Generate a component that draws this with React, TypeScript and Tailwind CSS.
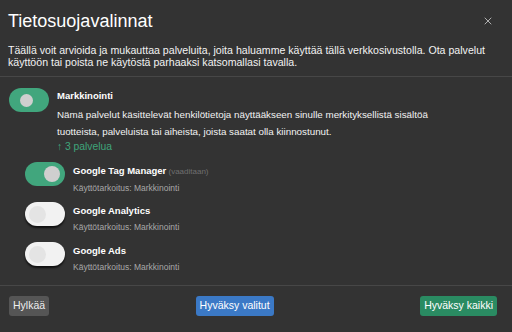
import { X } from "lucide-react"

const services = [
  { name: "Google Tag Manager", required: true, on: true },
  { name: "Google Analytics", required: false, on: false },
  { name: "Google Ads", required: false, on: false },
]

function Toggle({ on, half }: { on: boolean; half?: boolean }) {
  if (half) {
    return (
      <div className="w-10 h-6 rounded-full bg-[#41a67d] flex items-center pl-[11px] shrink-0">
        <div className="w-[13px] h-[13px] rounded-full bg-[#cfcfcf]" />
      </div>
    )
  }
  return on ? (
    <div className="w-10 h-6 rounded-full bg-[#41a67d] flex items-center justify-end pr-[5px] shrink-0">
      <div className="w-[16px] h-[16px] rounded-full bg-[#cfcfcf]" />
    </div>
  ) : (
    <div className="w-10 h-6 rounded-full bg-[#f2f2f2] flex items-center pl-[4px] shrink-0 shadow-[0_2px_2px_rgba(0,0,0,0.7)]">
      <div className="w-[17px] h-[17px] rounded-full bg-[#e4e4e4]" />
    </div>
  )
}

export default function App() {
  return (
    <div className="w-[512px] h-[332px] bg-[#333333] text-[#f2f2f2] font-['Liberation_Sans',Arial,sans-serif] flex flex-col overflow-hidden">
      {/* Header */}
      <div className="px-2 pt-[10px] pb-[8px] border-b border-[#474747]">
        <div className="flex items-center justify-between">
          <h1 className="text-[18px] leading-[22px] text-white">Tietosuojavalinnat</h1>
          <X className="w-3 h-3 text-[#c4c4c4] mr-[10px]" strokeWidth={1.75} />
        </div>
        <p className="text-[10.6px] leading-[12px] mt-[12px]">
          Täällä voit arvioida ja mukauttaa palveluita, joita haluamme käyttää tällä verkkosivustolla. Ota palvelut
          käyttöön tai poista ne käytöstä parhaaksi katsomallasi tavalla.
        </p>
      </div>

      {/* Body */}
      <div className="flex-1 pl-[9px] pt-[11px]">
        <div className="flex gap-2">
          <Toggle on half />
          <div className="pt-[1px]">
            <div className="text-[9.5px] font-bold leading-[14px] text-white">Markkinointi</div>
            <p className="text-[9.8px] leading-[17px] mt-[3px] pr-10">
              Nämä palvelut käsittelevät henkilötietoja näyttääkseen sinulle merkityksellistä sisältöä
              <br />
              tuotteista, palveluista tai aiheista, joista saatat olla kiinnostunut.
            </p>
            <div className="text-[10.3px] leading-[14px] text-[#3fa57b]">↑ 3 palvelua</div>
          </div>
        </div>

        <div className="flex flex-col pl-4 mt-[8px]">
          {services.map((s) => (
            <div key={s.name} className="flex gap-2 h-10">
              <Toggle on={s.on} />
              <div className="pt-[3px]">
                <div className="text-[9.5px] font-bold leading-[12px] text-white">
                  {s.name}
                  {s.required && <span className="font-normal text-[8px] text-[#6f6f6f]"> (vaaditaan)</span>}
                </div>
                <div className="text-[8.5px] leading-[12px] mt-[4px] text-[#a8a8a8]">Käyttötarkoitus: Markkinointi</div>
              </div>
            </div>
          ))}
        </div>
      </div>

      {/* Footer */}
      <div className="border-t border-[#474747] h-[47px] flex items-start justify-between pl-[9px] pr-[15px] pt-[10px]">
        <button className="h-5 px-[4px] rounded-[3px] bg-[#555555] text-[10.5px] text-[#eeeeee]">Hylkää</button>
        <button className="h-5 px-[4px] rounded-[3px] bg-[#3b79c6] text-[10.5px] text-white">Hyväksy valitut</button>
        <button className="h-5 px-[4px] rounded-[3px] bg-[#2a8b62] text-[10.5px] text-white">Hyväksy kaikki</button>
      </div>
    </div>
  )
}
